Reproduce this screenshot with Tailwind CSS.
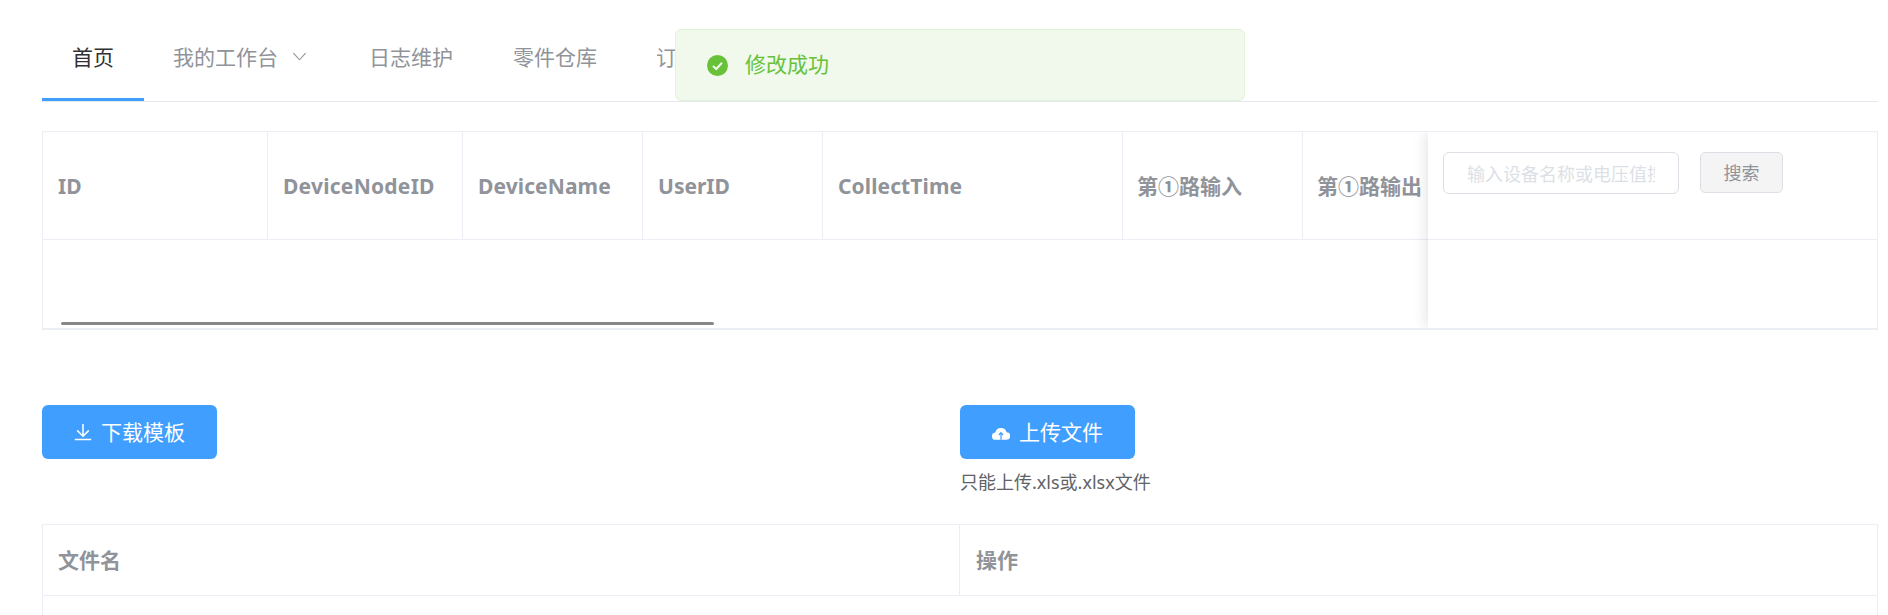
<!DOCTYPE html>
<html lang="zh">
<head>
<meta charset="utf-8">
<script src="https://cdn.jsdelivr.net/npm/@tailwindcss/browser@4"></script>
</head>
<body class="relative h-[615px] overflow-hidden bg-white font-['Noto_Sans','Noto_Sans_CJK_SC',sans-serif] text-[#606266]">
  <main class="pl-[42px] pr-[10px]">
    <!-- tabs -->
    <nav class="flex h-[102px] border-b border-[#e4e7ed] pt-[32px] text-[21px] leading-[50px] text-[#909399]">
      <a class="h-[69px] w-[102px] border-b-[3px] border-[#409eff] text-center text-[#303133]">首页</a>
      <a class="ml-[29px] flex h-[50px] w-[136px] items-center">我的工作台
        <svg class="ml-[14px] mt-[-2px] h-[15px] w-[15px]" viewBox="0 0 16 16" fill="none" stroke="#909399" stroke-width="1.2"><path d="M1.5 4.5 L8 11.5 L14.5 4.5"/></svg>
      </a>
      <a class="ml-[60px]">日志维护</a>
      <a class="ml-[60px]">零件仓库</a>
      <a class="ml-[59px]">订单管理</a>
    </nav>

    <!-- device table -->
    <section class="relative mt-[29px] h-[199px] overflow-hidden border border-b-2 border-[#ebeef5]">
      <div class="flex h-[108px] items-center border-b border-[#ebeef5] text-[21px] font-bold leading-none text-[#909399]">
        <div class="flex h-full w-[225px] items-center border-r border-[#ebeef5] pl-[15px] pt-[1px]">ID</div>
        <div class="flex h-full w-[195px] items-center border-r border-[#ebeef5] pl-[15px] pt-[1px] tracking-[0.25px]">DeviceNodeID</div>
        <div class="flex h-full w-[180px] items-center border-r border-[#ebeef5] pl-[15px] pt-[1px] tracking-[0.1px]">DeviceName</div>
        <div class="flex h-full w-[180px] items-center border-r border-[#ebeef5] pl-[15px] pt-[1px]">UserID</div>
        <div class="flex h-full w-[300px] items-center border-r border-[#ebeef5] pl-[15px] pt-[1px] tracking-[0.1px]">CollectTime</div>
        <div class="flex h-full w-[180px] items-center border-r border-[#ebeef5] pl-[14px] pt-[1px]">第①路输入</div>
        <div class="flex h-full w-[180px] items-center border-r border-[#ebeef5] pl-[14px] pt-[1px]">第①路输出</div>
      </div>
      <div class="mt-[82px] ml-[18px] h-[3px] w-[653px] rounded-full bg-[#888888]"></div>
      <!-- fixed column -->
      <div class="absolute top-0 right-0 bottom-0 w-[449px] bg-white shadow-[0_0_15px_rgba(0,0,0,0.14)]">
        <div class="flex h-[108px] items-start gap-[21px] border-b border-[#ebeef5] pt-[20px] pl-[15px]">
          <div class="h-[42px] w-[236px] rounded-[6px] border border-[#dcdfe6] px-[23px]">
            <div class="overflow-hidden whitespace-nowrap text-[18px] leading-[42px] text-[#dcdfe6]">输入设备名称或电压值搜索</div>
          </div>
          <button class="flex h-[41px] w-[83px] items-center justify-center rounded-[5px] border border-[#dcdfe6] bg-[#f4f4f5] pt-[2px] text-[18px] text-[#909399]">搜索</button>
        </div>
      </div>
    </section>

    <!-- actions -->
    <section class="mt-[75px] flex h-[119px] items-start">
      <div class="w-[918px]">
        <button class="flex h-[54px] w-[175px] items-center justify-center gap-[9px] rounded-[6px] bg-[#409eff] text-[21px] text-white">
          <svg class="h-[18px] w-[18px]" viewBox="0 0 18 18" fill="none" stroke="#ffffff" stroke-width="1.5"><path d="M9 1 V13 M3.2 7.4 L9 13.2 L14.8 7.4 M0.8 16.6 H17.2"/></svg>
          <span class="pt-[1px]">下载模板</span>
        </button>
      </div>
      <div>
        <button class="flex h-[54px] w-[175px] items-center justify-center gap-[9px] rounded-[6px] bg-[#409eff] text-[21px] text-white">
          <svg class="h-[15px] w-[18px]" viewBox="0 0 18 15"><path fill="#ffffff" d="M3.9 14.8 A3.6 3.6 0 0 1 3.2 7.6 A5.9 5.9 0 0 1 14.6 7.2 A3.8 3.8 0 0 1 14.2 14.8 Z"/><path fill="none" stroke="#409eff" stroke-width="1.2" d="M9 14.8 V7.8 M6.8 10 L9 7.6 L11.2 10"/></svg>
          <span class="pt-[1px]">上传文件</span>
        </button>
        <p class="mt-[10px] text-[18px] leading-[26px] text-[#606266]">只能上传.xls或.xlsx文件</p>
      </div>
    </section>

    <!-- file table -->
    <section class="h-[120px] border border-[#ebeef5] border-b-0">
      <div class="flex h-[71px] items-center border-b border-[#ebeef5] text-[21px] font-bold text-[#909399]">
        <div class="flex h-full w-[917px] items-center border-r border-[#ebeef5] pl-[15px] pt-[2px]">文件名</div>
        <div class="pl-[16px] pt-[2px]">操作</div>
      </div>
    </section>
  </main>

  <!-- toast -->
  <div class="absolute top-[29px] left-[675px] flex h-[72px] w-[570px] items-center rounded-[6px] border border-[#e1f3d8] bg-[#f0f9eb] pl-[31px] text-[21px] text-[#67c23a]">
    <svg class="h-[21px] w-[21px]" viewBox="0 0 21 21"><circle cx="10.5" cy="10.5" r="10.5" fill="#67c23a"/><path d="M6 11 L9.3 14 L15 7.8" fill="none" stroke="#f0f9eb" stroke-width="2"/></svg>
    <span class="ml-[17px]">修改成功</span>
  </div>
</body>
</html>
